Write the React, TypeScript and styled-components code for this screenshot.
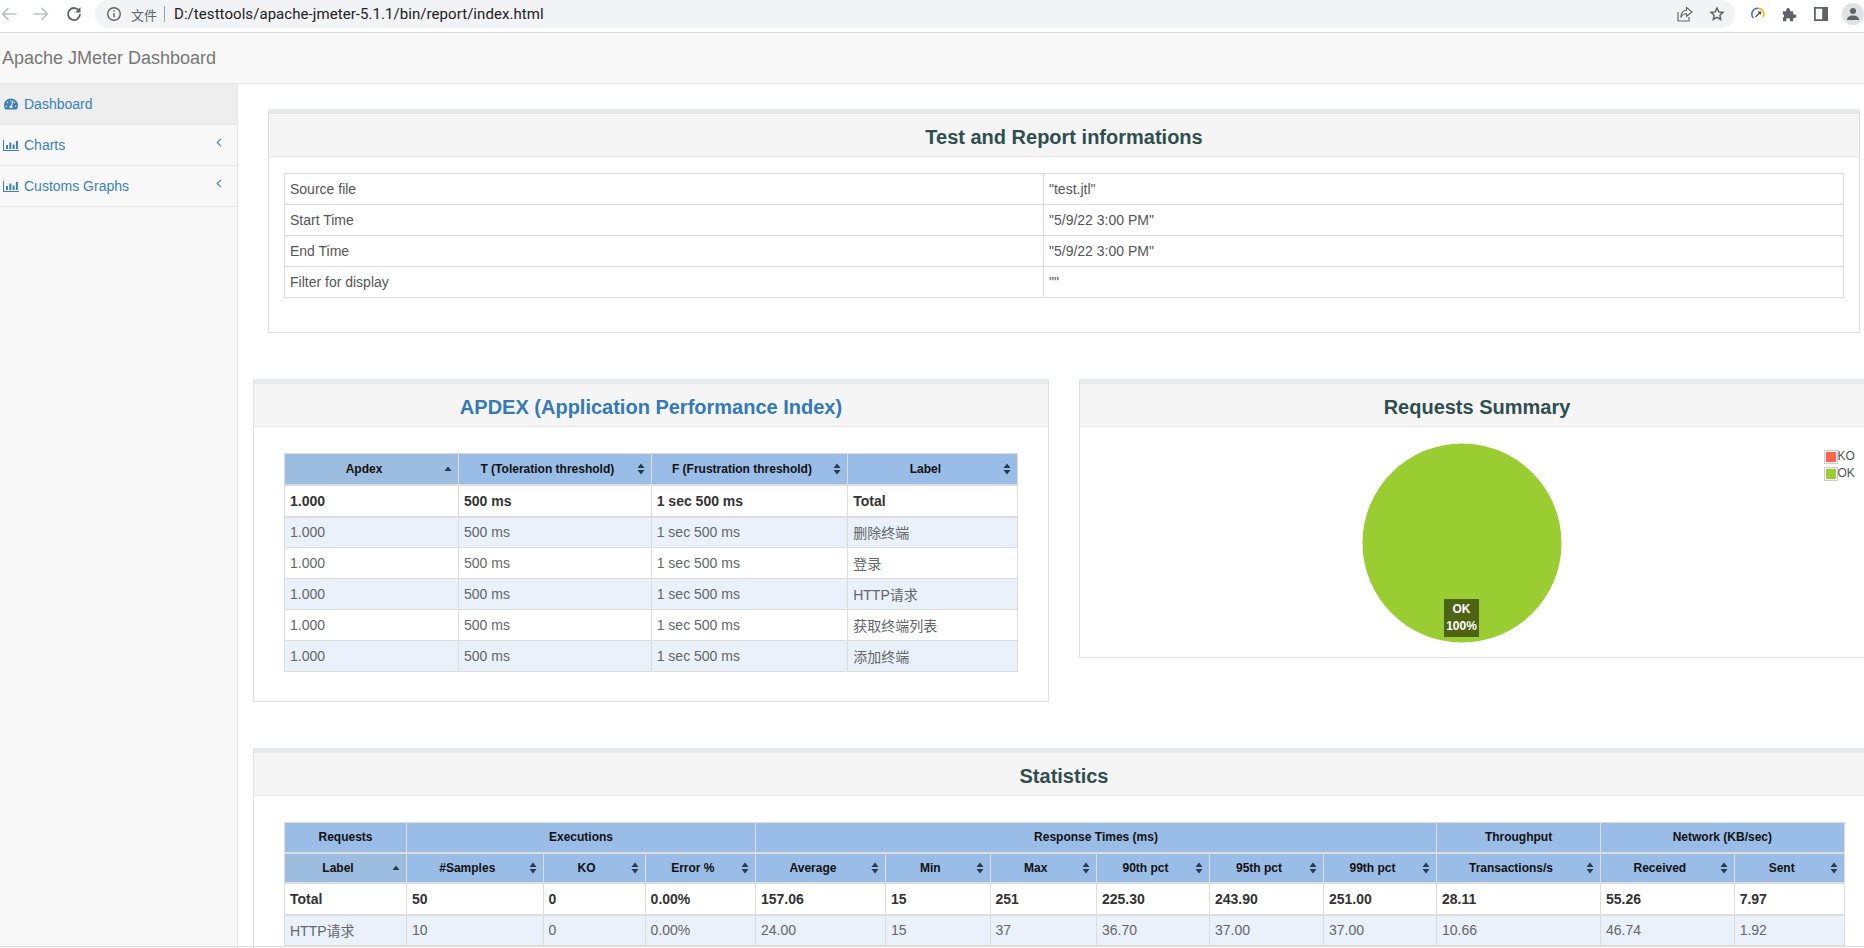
import React from "react";
import styled, { createGlobalStyle } from "styled-components";
import { FaTachometerAlt } from "react-icons/fa";

const Global = createGlobalStyle`
  html, body { margin: 0; padding: 0; height: 100%; overflow: hidden; background: #fff; }
  body { font-family: "Liberation Sans", Arial, "Noto Sans CJK SC", sans-serif; font-size: 14px; color: #676a6c; }
  * { box-sizing: border-box; }
`;

const Page = styled.div`
  width: 1864px;
  height: 948px;
  overflow: hidden;
  position: relative;
  display: flex;
  flex-direction: column;
`;

/* Browser chrome */
const BrowserBar = styled.div`
  height: 33px;
  flex: none;
  display: flex;
  align-items: flex-start;
  background: #fff;
  border-bottom: 1px solid #dadce0;
`;
const NavIcons = styled.div`
  width: 95px;
  flex: none;
  height: 28px;
  display: flex;
  align-items: center;
  padding-left: 1px;
  gap: 14px;
`;
const AddressPill = styled.div`
  width: 1640px;
  height: 28px;
  flex: none;
  background: #f1f3f4;
  border-radius: 14px;
  display: flex;
  align-items: center;
  padding-left: 11px;
  color: #202124;
`;
const Protocol = styled.span`
  font-family: "Noto Sans CJK SC", sans-serif;
  font-size: 13px;
  color: #5f6368;
  margin-left: 9px;
`;
const Sep = styled.span`
  width: 1px;
  height: 16px;
  background: #9aa0a6;
  margin: 0 9px 0 7px;
`;
const UrlText = styled.span`
  font-family: "Roboto", sans-serif;
  font-size: 15px;
  letter-spacing: 0.06px;
  color: #202124;
`;
const PillActions = styled.div`
  margin-left: auto;
  display: flex;
  align-items: center;
  gap: 16px;
  padding-right: 10px;
`;
const Extensions = styled.div`
  flex: 1;
  height: 28px;
  display: flex;
  align-items: center;
  padding-left: 16px;
  gap: 17px;
`;
const Avatar = styled.div`
  width: 22px;
  height: 22px;
  flex: none;
  border-radius: 50%;
  background: #dee1e6;
  display: flex;
  align-items: center;
  justify-content: center;
  margin-left: -3px;
`;

/* Report navbar */
const Navbar = styled.header`
  height: 51px;
  flex: none;
  background: #f8f8f8;
  border-bottom: 1px solid #e7e7e7;
  display: flex;
  align-items: center;
  padding-left: 2px;
`;
const Brand = styled.div`
  font-size: 18px;
  color: #777;
`;

const Body = styled.div`
  flex: 1;
  display: flex;
  min-height: 0;
`;
const Sidebar = styled.nav`
  width: 238px;
  flex: none;
  background: #f8f8f8;
  border-right: 1px solid #e7e7e7;
`;
const SideItem = styled.a<{ $active?: boolean }>`
  height: 41px;
  display: flex;
  align-items: center;
  padding-left: ${(p) => (p.$active ? 4 : 3)}px;
  color: #3b80bd;
  background: ${(p) => (p.$active ? "#eeeeee" : "transparent")};
  border-bottom: 1px solid #e7e7e7;
  position: relative;
  svg.lead { flex: none; margin-right: ${(p) => (p.$active ? 6 : 5)}px; }
`;
const Angle = styled.svg`
  position: absolute;
  left: 216px;
  top: 13px;
  width: 6px;
  height: 9px;
`;

const Main = styled.main`
  width: 1637px;
  flex: none;
  padding: 25px 0 0 15px;
`;
const Panel = styled.section<{ $w?: number; $mx?: number; $h?: number }>`
  width: ${(p) => p.$w ?? 1622}px;
  ${(p) => (p.$mx ? `margin: 0 ${p.$mx}px;` : "")}
  ${(p) => (p.$h ? `height: ${p.$h}px;` : "")}
  flex: none;
  background: #fff;
  border: 1px solid #e0e0e0;
  border-top: 5px solid #e7eaec;
`;
const PanelHead = styled.div`
  height: 43px;
  padding-top: 3px;
  background: #f5f5f5;
  border-bottom: 1px solid #e7e7e7;
  display: flex;
  align-items: center;
  justify-content: center;
`;
const Title = styled.h2<{ $link?: boolean }>`
  margin: 0;
  font-size: 20px;
  font-weight: bold;
  line-height: 24px;
  color: ${(p) => (p.$link ? "#337ab7" : "#2f4f4f")};
`;
const PanelBody = styled.div<{ $pt?: number; $pl?: number; $pb?: number }>`
  padding: ${(p) => p.$pt ?? 25}px 0 ${(p) => p.$pb ?? 30}px ${(p) => p.$pl ?? 30}px;
`;
const Row = styled.div`
  display: flex;
  align-items: flex-start;
  gap: 30px;
  margin-top: 46px;
`;
const Spaced = styled.div`
  margin-top: 46px;
`;

const Table = styled.table<{ $w: number }>`
  width: ${(p) => p.$w}px;
  table-layout: fixed;
  border-collapse: collapse;
  font-size: 14px;
  color: #676a6c;
  td, th { border: 1px solid #dddddd; }
`;
const InfoCell = styled.td`
  height: 31px;
  padding: 0 5px;
  color: #555;
`;
const Th = styled.th<{ $sorted?: boolean; $h?: number }>`
  height: ${(p) => p.$h ?? 31}px;
  padding: 0 20px 0 5px;
  font-size: 12px;
  font-weight: bold;
  color: #111;
  text-align: center;
  background: ${(p) => (p.$sorted ? "#9cbddf" : "#99bde7")};
  position: relative;
  border-bottom-width: 2px !important;
  svg { position: absolute; right: 6px; top: 50%; margin-top: -6px; width: 8px; height: 12px; }
`;
const GroupTh = styled.th`
  height: 30px;
  padding: 0 5px;
  font-size: 12px;
  font-weight: bold;
  color: #111;
  text-align: center;
  background: #99bde7;
  border-bottom-width: 2px !important;
`;
const Td = styled.td<{ $bold?: boolean; $alt?: boolean; $h?: number }>`
  height: ${(p) => p.$h ?? 31}px;
  padding: 0 5px;
  white-space: nowrap;
  font-weight: ${(p) => (p.$bold ? "bold" : "normal")};
  color: ${(p) => (p.$bold ? "#333" : "#636668")};
  background: ${(p) => (p.$alt ? "#eaf1fa" : "#fff")};
  ${(p) => (p.$bold ? "border-bottom-width: 2px !important;" : "")}
`;

const ChartArea = styled.div`
  position: relative;
  height: 230px;
`;
const Pie = styled.svg`
  position: absolute;
  left: 282px;
  top: 16px;
  width: 200px;
  height: 200px;
`;
const PieLabel = styled.div`
  position: absolute;
  left: 364px;
  top: 172px;
  width: 35px;
  height: 38px;
  background: #4d6414;
  color: #fff;
  font-size: 12px;
  font-weight: bold;
  line-height: 17px;
  text-align: center;
  padding-top: 2px;
  white-space: nowrap;
`;
const Legend = styled.div`
  position: absolute;
  left: 743.5px;
  top: 23px;
  font-size: 12px;
  color: #545454;
  display: flex;
  flex-direction: column;
  gap: 4px;
`;
const LegendRow = styled.div`
  display: flex;
  align-items: center;
  height: 13px;
  line-height: 13px;
`;
const Swatch = styled.span<{ $c: string }>`
  width: 14px;
  height: 14px;
  border: 1px solid #ccc;
  padding: 1px;
  display: block;
  &::before { content: ""; display: block; width: 100%; height: 100%; background: ${(p) => p.$c}; }
`;
const BottomEdge = styled.div`
  position: absolute;
  left: 0;
  right: 0;
  bottom: 1px;
  height: 1px;
  background: #dddddd;
`;

const SortBoth = () => (
  <svg viewBox="0 0 8 12"><path d="M4 0.5 7.5 5H.5zM4 11.5.5 7h7z" fill="#2b3a4a" /></svg>
);
const SortUp = () => (
  <svg viewBox="0 0 8 12"><path d="M4 3.5 7.5 8H.5z" fill="#2b3a4a" /></svg>
);
const BarIcon = () => (
  <svg className="lead" width="16" height="11" viewBox="0 0 16 11" fill="#3b80bd">
    <path d="M0 0h1v10h15v1H0z" />
    <path d="M3 5h2v4H3zM6.3 2.5h2V9h-2zM9.6 4.5h2V9h-2zM12.9 1h2v8h-2z" />
  </svg>
);
const AngleLeft = () => (
  <Angle viewBox="0 0 6 9"><path d="M5 .8 1.2 4.5 5 8.2" fill="none" stroke="#3b80bd" strokeWidth="1.1" /></Angle>
);

const apdexCols = [174, 192.7, 196.5, 170.3];
const apdexHead = ["Apdex", "T (Toleration threshold)", "F (Frustration threshold)", "Label"];
const apdexRows = ["删除终端", "登录", "HTTP请求", "获取终端列表", "添加终端"];

const statCols = [122, 136.6, 102, 110.4, 130, 104.5, 106.5, 113, 114, 113, 164, 133.6, 110];
const statGroups: [string, number][] = [
  ["Requests", 1], ["Executions", 3], ["Response Times (ms)", 6], ["Throughput", 1], ["Network (KB/sec)", 2],
];
const statHead = ["Label", "#Samples", "KO", "Error %", "Average", "Min", "Max", "90th pct", "95th pct", "99th pct", "Transactions/s", "Received", "Sent"];
const statRows = [
  ["Total", "50", "0", "0.00%", "157.06", "15", "251", "225.30", "243.90", "251.00", "28.11", "55.26", "7.97"],
  ["HTTP请求", "10", "0", "0.00%", "24.00", "15", "37", "36.70", "37.00", "37.00", "10.66", "46.74", "1.92"],
];
const info = [
  ["Source file", '"test.jtl"'],
  ["Start Time", '"5/9/22 3:00 PM"'],
  ["End Time", '"5/9/22 3:00 PM"'],
  ["Filter for display", '""'],
];

export default function App() {
  return (
    <Page>
      <Global />
      <BrowserBar>
        <NavIcons>
          <svg width="16" height="16" viewBox="0 0 16 16" fill="none" stroke="#bdc1c6" strokeWidth="1.7"><path d="M15.5 8H1.7M7.5 2 1.7 8l5.800 6" /></svg>
          <svg width="16" height="16" viewBox="0 0 16 16" fill="none" stroke="#bdc1c6" strokeWidth="1.7" style={{ marginLeft: 2 }}><path d="M1 8H14.300M8.500 2l5.800 6-5.800 6" /></svg>
          <svg width="16" height="16" viewBox="0 0 16 16" fill="none" stroke="#5f6368" strokeWidth="1.8" style={{ marginLeft: 3 }}><path d="M13.3 5.2A6 6 0 1 0 14 8" /><path d="M14.5 1v5.500H9z" fill="#5f6368" stroke="none" /></svg>
        </NavIcons>
        <AddressPill>
          <svg width="16" height="16" viewBox="0 0 16 16" fill="none" stroke="#5f6368" strokeWidth="1.4"><circle cx="8" cy="8" r="6.3" /><path d="M8 7v4.2M8 4.3v1.5" /></svg>
          <Protocol>文件</Protocol>
          <Sep />
          <UrlText>D:/testtools/apache-jmeter-5.1.1/bin/report/index.html</UrlText>
          <PillActions>
            <svg width="16" height="16" viewBox="0 0 16 16" fill="none" stroke="#5f6368" strokeWidth="1.1"><path d="M1 6v9h11v-4" /><path d="M9.5 1.5 15 6l-5.500 4.300V7.800C7 7.800 5 9 3.800 11.500 3.800 7.500 6 4.500 9.500 4.200z" /></svg>
            <svg width="16" height="16" viewBox="0 0 16 16" fill="none" stroke="#5f6368" strokeWidth="1.5"><path d="M8 2l1.800 3.900 4.200.5-3.100 2.900.8 4.200L8 11.400 4.300 13.500l.8-4.200L2 6.400l4.200-.5z" /></svg>
          </PillActions>
        </AddressPill>
        <Extensions>
          <svg width="14" height="15" viewBox="0 0 14 15" fill="none"><path d="M7 1.200A5.800 5.800 0 0 0 2.500 11" stroke="#3b78e7" strokeWidth="1.6" /><path d="M7 1.200A5.800 5.800 0 0 1 12 10" stroke="#f4b400" strokeWidth="1.6" /><path d="M4.500 10 9.500 5M7 5h2.500v2.500" stroke="#444" strokeWidth="1.1" /></svg>
          <svg width="15" height="15" viewBox="0 0 15 15" fill="#5f6368"><path d="M1 4.200h3.200V3a1.900 1.900 0 0 1 3.800 0v1.200h3.200v3h1.200a1.900 1.900 0 0 1 0 3.800h-1.200v3.200H8v-1.200a1.900 1.900 0 0 0-3.800 0v1.200H1v-3.600a1.800 1.800 0 0 0 0-3.300z" /></svg>
          <svg width="14" height="14" viewBox="0 0 14 14" fill="none"><path d="M0 0h14v14H0zM1.800 1.800v10.400h6.400V1.800z" fill="#5f6368" fillRule="evenodd" /></svg>
          <Avatar>
            <svg width="14" height="14" viewBox="0 0 14 14" fill="#5f6368"><circle cx="7" cy="4" r="3" /><path d="M1 13c0-3 2.500-4.500 6-4.500s6 1.500 6 4.500z" /></svg>
          </Avatar>
        </Extensions>
      </BrowserBar>
      <Navbar><Brand>Apache JMeter Dashboard</Brand></Navbar>
      <Body>
        <Sidebar>
          <SideItem $active><FaTachometerAlt className="lead" size={14} color="#3b80bd" />Dashboard</SideItem>
          <SideItem><BarIcon />Charts<AngleLeft /></SideItem>
          <SideItem><BarIcon />Customs Graphs<AngleLeft /></SideItem>
        </Sidebar>
        <Main>
          <Panel $w={1592} $mx={15}>
            <PanelHead><Title>Test and Report informations</Title></PanelHead>
            <PanelBody $pl={15} $pt={16} $pb={34}>
              <Table $w={1559.5}>
                <colgroup><col style={{ width: 759 }} /><col /></colgroup>
                <tbody>
                  {info.map((r) => (
                    <tr key={r[0]}><InfoCell>{r[0]}</InfoCell><InfoCell>{r[1]}</InfoCell></tr>
                  ))}
                </tbody>
              </Table>
            </PanelBody>
          </Panel>
          <Row>
            <Panel $w={796}>
              <PanelHead><Title $link>APDEX (Application Performance Index)</Title></PanelHead>
              <PanelBody $pt={26} $pb={29}>
                <Table $w={733.5}>
                  <colgroup>{apdexCols.map((w, i) => <col key={i} style={{ width: w }} />)}</colgroup>
                  <thead>
                    <tr>
                      {apdexHead.map((h, i) => (
                        <Th key={h} $sorted={i === 0} $h={31}>{h}{i === 0 ? <SortUp /> : <SortBoth />}</Th>
                      ))}
                    </tr>
                  </thead>
                  <tbody>
                    <tr>
                      {["1.000", "500 ms", "1 sec 500 ms", "Total"].map((c) => <Td key={c} $bold $h={32}>{c}</Td>)}
                    </tr>
                    {apdexRows.map((l, i) => (
                      <tr key={l}>
                        {["1.000", "500 ms", "1 sec 500 ms", l].map((c) => <Td key={c} $alt={i % 2 === 0}>{c}</Td>)}
                      </tr>
                    ))}
                  </tbody>
                </Table>
              </PanelBody>
            </Panel>
            <Panel $w={796} $h={279}>
              <PanelHead><Title>Requests Summary</Title></PanelHead>
              <ChartArea>
                <Pie viewBox="0 0 200 200"><circle cx="100" cy="100" r="99.5" fill="#9acd32" /></Pie>
                <PieLabel>OK<br />100%</PieLabel>
                <Legend>
                  <LegendRow><Swatch $c="#ff6347" />KO</LegendRow>
                  <LegendRow><Swatch $c="#9acd32" />OK</LegendRow>
                </Legend>
              </ChartArea>
            </Panel>
          </Row>
          <Spaced>
            <Panel>
              <PanelHead><Title>Statistics</Title></PanelHead>
              <PanelBody $pt={26}>
                <Table $w={1559.5}>
                  <colgroup>{statCols.map((w, i) => <col key={i} style={{ width: w }} />)}</colgroup>
                  <thead>
                    <tr>
                      {statGroups.map(([g, n]) => <GroupTh key={g} colSpan={n}>{g}</GroupTh>)}
                    </tr>
                    <tr>
                      {statHead.map((h, i) => (
                        <Th key={h} $sorted={i === 0} $h={30}>{h}{i === 0 ? <SortUp /> : <SortBoth />}</Th>
                      ))}
                    </tr>
                  </thead>
                  <tbody>
                    {statRows.map((r, ri) => (
                      <tr key={r[0]}>
                        {r.map((c, i) => <Td key={i} $bold={ri === 0} $alt={ri === 1} $h={ri === 0 ? 32 : 31}>{c}</Td>)}
                      </tr>
                    ))}
                  </tbody>
                </Table>
              </PanelBody>
            </Panel>
          </Spaced>
        </Main>
      </Body>
      <BottomEdge />
    </Page>
  );
}
